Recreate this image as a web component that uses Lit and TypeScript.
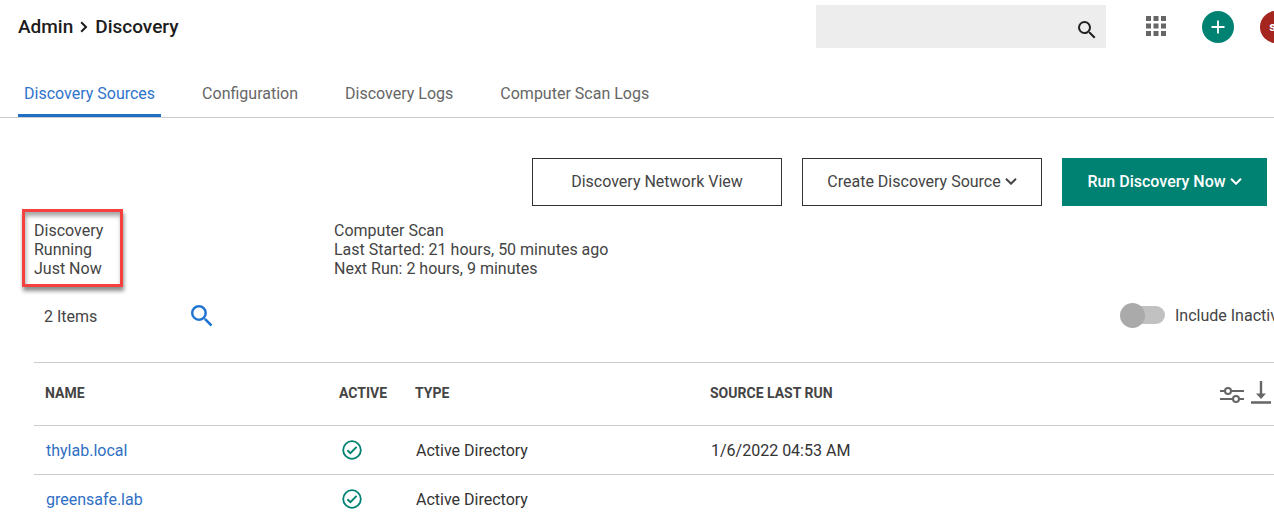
import { LitElement, html, css, svg } from "lit";
import { customElement, state } from "lit/decorators.js";

interface Source {
  name: string;
  type: string;
  lastRun: string;
}

const TABS = ["Discovery Sources", "Configuration", "Discovery Logs", "Computer Scan Logs"];

const SOURCES: Source[] = [
  { name: "thylab.local", type: "Active Directory", lastRun: "1/6/2022 04:53 AM" },
  { name: "greensafe.lab", type: "Active Directory", lastRun: "" },
];

const searchIcon = html`<svg class="search-icon" viewBox="3 3 18 18" aria-hidden="true">
  <path fill="currentColor" d="M15.5 14h-.79l-.28-.27A6.47 6.47 0 0 0 16 9.5 6.5 6.5 0 1 0 9.5 16c1.61 0 3.09-.59 4.23-1.57l.27.28v.79l5 4.99L20.49 19l-4.99-5zm-6 0C7.01 14 5 11.99 5 9.5S7.01 5 9.5 5 14 7.01 14 9.5 11.99 14 9.5 14z"/>
</svg>`;

const chevron = html`<svg class="chevron" viewBox="0 0 12 8" aria-hidden="true">
  <path d="M1 1.7 6 6.7l5-5" fill="none" stroke="currentColor" stroke-width="2"/>
</svg>`;

@customElement("app-root")
export class AppRoot extends LitElement {
  @state() private activeTab = 0;

  static styles = css`
    :host {
      display: block;
      overflow: hidden;
      background: #fff;
      color: #444;
      font: 16px/19px Roboto, sans-serif;
    }
    *, *::before, *::after { box-sizing: border-box; }
    a { color: inherit; text-decoration: none; }
    button { font: inherit; color: inherit; background: none; border: 0; padding: 0; cursor: pointer; }
    svg { display: block; }

    /* The canvas runs slightly past the right edge of the window. */
    .page { width: calc(100% + 24px); min-height: 100vh; }

    .top { display: flex; align-items: center; height: 53px; padding: 0 6px 0 18px; }
    .crumbs { display: flex; align-items: center; gap: 7px; flex: 1; font-size: 19px; font-weight: 500; color: #1c1c1c; }
    .crumb-sep { width: 8px; height: 12px; }
    .search { display: flex; align-items: center; width: 290px; height: 43px; padding: 6px 10px 0 12px; background: #ededed; color: #222; }
    .search input { flex: 1; min-width: 0; border: 0; outline: 0; background: none; font: inherit; }
    .search .search-icon { width: 18px; height: 18px; }
    .apps { margin-left: 40px; color: #666; }
    .add { display: grid; place-items: center; width: 32px; height: 32px; margin-left: 36px; border-radius: 50%; background: #008272; color: #fff; }
    .avatar { display: grid; place-items: center; width: 32px; height: 32px; margin-left: 26px; border-radius: 50%; background: #a4261f; color: #fff; font-size: 13px; font-weight: 700; }

    .tabs { display: flex; gap: 35px; margin-top: 17px; padding-left: 18px; border-bottom: 1px solid #ccc; color: #666; }
    .tab { padding: 14px 6px 11px; border-bottom: 3px solid transparent; }
    .tab.active { color: #2f74cc; border-color: #1f6fc5; }

    .actions { display: flex; justify-content: flex-end; gap: 20px; padding: 40px 31px 0 0; }
    .btn { display: flex; align-items: center; justify-content: center; gap: 4px; width: 240px; height: 48px; padding-bottom: 2px; border: 1px solid #333; }
    .btn.wide { width: 250px; }
    .btn.primary { width: 205px; border-color: #008272; background: #008272; color: #fff; font-weight: 500; }
    .chevron { width: 12px; height: 8px; }

    .status { display: grid; grid-template-columns: 312px 1fr; align-items: start; padding: 3px 0 0 22px; }
    .status p { margin: 0; }
    .highlight { width: 101px; padding: 9px 9px 6px; border: 3px solid #f5413e; box-shadow: 1px 4px 4px rgba(0, 0, 0, .45), inset 1px 4px 4px rgba(0, 0, 0, .35); }
    .scan { padding-top: 12px; }

    .toolbar { display: flex; align-items: center; height: 58px; padding-left: 44px; margin-bottom: 17px; }
    .count { width: 147px; }
    .find { color: #1f74d1; }
    .find .search-icon { width: 22px; height: 22px; }
    .toggle { display: flex; align-items: center; gap: 10px; margin-left: auto; padding-bottom: 2px; white-space: nowrap; width: 178px; }
    .toggle input { appearance: none; flex: none; display: flex; align-items: center; width: 42px; height: 18px; margin: 0 0 0 3px; border-radius: 9px; background: #c1c1c1; }
    .toggle input::before { content: ""; flex: none; width: 25px; height: 25px; margin-left: -3px; border-radius: 50%; background: #aaa; }
    .toggle input:checked { justify-content: flex-end; }

    .grid { padding-left: 34px; }
    table { width: 100%; table-layout: fixed; border-collapse: collapse; }
    tr { border-top: 1px solid #ccc; }
    th, td { padding: 0 11px; text-align: left; }
    th { height: 63px; padding-bottom: 2px; font-size: 14px; font-weight: 700; color: #444; }
    td { height: 49px; padding-left: 12px; color: #333; }
    .c-name { width: 294px; }
    .c-active { width: 76px; }
    .c-type { width: 295px; }
    .name { color: #2f6fc4; }
    .tools { display: flex; justify-content: flex-end; align-items: center; gap: 7px; padding-right: 16px; color: #666; }
  `;

  private check() {
    return html`<svg width="24" height="20" viewBox="-2 0 24 20" role="img" aria-label="Active" fill="none" stroke="#008272">
      ${svg`<circle cx="10" cy="10" r="8.8" stroke-width="1.8"/><path d="m5.4 10.2 3 2.9 6.2-6.3" stroke-width="1.9"/>`}
    </svg>`;
  }

  render() {
    return html`
      <div class="page">
        <header class="top">
          <nav class="crumbs" aria-label="Breadcrumb">
            <a href="#admin">Admin</a>
            <svg class="crumb-sep" viewBox="0 0 8 12" aria-hidden="true"><path d="m1.2 1.2 4.8 4.8-4.8 4.8" fill="none" stroke="currentColor" stroke-width="2"/></svg>
            <span>Discovery</span>
          </nav>
          <label class="search"><input type="search" aria-label="Search" />${searchIcon}</label>
          <button class="apps" aria-label="Applications">
            <svg width="20" height="22" viewBox="0 0 20 22" fill="currentColor">
              ${[0, 7.5, 15].map((y) => [0, 7.5, 15].map((x) => svg`<rect x=${x} y=${y} width="5" height="5"/>`))}
            </svg>
          </button>
          <button class="add" aria-label="Add">
            <svg width="14" height="14" viewBox="0 0 14 14"><path d="M7 .5v13M.5 7h13" stroke="currentColor" stroke-width="1.8"/></svg>
          </button>
          <button class="avatar" aria-label="Account">sa</button>
        </header>

        <nav class="tabs">
          ${TABS.map((t, i) => html`<button class="tab ${i === this.activeTab ? "active" : ""}" @click=${() => (this.activeTab = i)}>${t}</button>`)}
        </nav>

        <div class="actions">
          <button class="btn wide">Discovery Network View</button>
          <button class="btn">Create Discovery Source ${chevron}</button>
          <button class="btn primary">Run Discovery Now ${chevron}</button>
        </div>

        <section class="status">
          <div class="highlight">
            <p>Discovery</p>
            <p>Running</p>
            <p>Just Now</p>
          </div>
          <div class="scan">
            <p>Computer Scan</p>
            <p>Last Started: 21 hours, 50 minutes ago</p>
            <p>Next Run: 2 hours, 9 minutes</p>
          </div>
        </section>

        <div class="toolbar">
          <span class="count">2 Items</span>
          <button class="find" aria-label="Search items">${searchIcon}</button>
          <label class="toggle"><input type="checkbox" role="switch" />Include Inactive</label>
        </div>

        <div class="grid">
          <table>
            <colgroup><col class="c-name" /><col class="c-active" /><col class="c-type" /><col /><col /></colgroup>
            <thead>
              <tr>
                <th>NAME</th>
                <th>ACTIVE</th>
                <th>TYPE</th>
                <th>SOURCE LAST RUN</th>
                <th>
                  <div class="tools">
                    <button aria-label="Columns">
                      <svg width="24" height="20" viewBox="0 0 24 20" fill="none" stroke="currentColor" stroke-width="2">
                        <path d="M0 8h5M11 8h13M0 16h13M19 16h5"/><circle cx="8" cy="8" r="3"/><circle cx="16" cy="16" r="3"/>
                      </svg>
                    </button>
                    <button aria-label="Download">
                      <svg width="20" height="24" viewBox="0 0 20 24">
                        <path d="M10 0v14M0 21.5h20" stroke="currentColor" stroke-width="2.4"/><path d="M5 12.5h10L10 18z" fill="currentColor"/>
                      </svg>
                    </button>
                  </div>
                </th>
              </tr>
            </thead>
            <tbody>
              ${SOURCES.map((s) => html`<tr>
                <td><a class="name" href="#source">${s.name}</a></td>
                <td>${this.check()}</td>
                <td>${s.type}</td>
                <td>${s.lastRun}</td>
                <td></td>
              </tr>`)}
            </tbody>
          </table>
        </div>
      </div>
    `;
  }
}
